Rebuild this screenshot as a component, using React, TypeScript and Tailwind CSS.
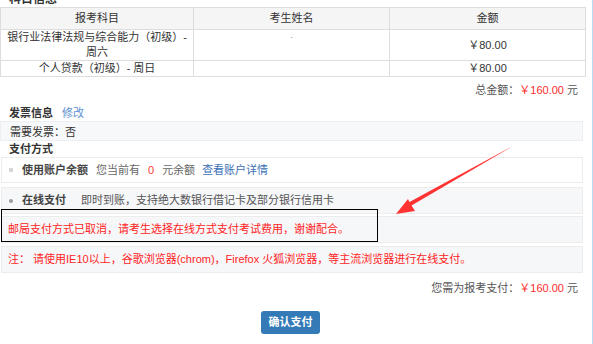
import React from "react";

export default function App() {
  const rows = [
    { subject: ["银行业法律法规与综合能力（初级）-", "周六"], name: "·", amount: "￥80.00" },
    { subject: ["个人贷款（初级）- 周日"], name: "", amount: "￥80.00" },
  ];

  return (
    <div
      className="relative w-[593px] h-[344px] overflow-hidden bg-white border-r border-[#b9dcf2] text-[11px] text-[#333]"
      style={{ fontFamily: '"Liberation Sans", "Noto Sans CJK SC", sans-serif' }}
    >
      <div className="w-[585px]">
        {/* 科目信息 */}
        <div className="-mt-[8px] h-[15px] pl-[9px] text-[12px] font-bold leading-[15px]">科目信息</div>

        <table className="w-[585px] border-collapse table-fixed">
          <colgroup>
            <col className="w-[193px]" />
            <col className="w-[196px]" />
            <col className="w-[196px]" />
          </colgroup>
          <thead>
            <tr className="h-[22px] bg-[#f5f5f5]">
              <th className="border border-[#dddddd] p-0 font-normal text-center">报考科目</th>
              <th className="border border-[#dddddd] p-0 font-normal text-center">考生姓名</th>
              <th className="border border-[#dddddd] p-0 font-normal text-center">金额</th>
            </tr>
          </thead>
          <tbody>
            {rows.map((r, i) => (
              <tr key={i}>
                <td className="border border-[#dddddd] p-0 text-center leading-[15px] whitespace-nowrap">
                  {r.subject.map((s, j) => (
                    <div key={j}>{s}</div>
                  ))}
                </td>
                <td className="border border-[#dddddd] p-0 text-center align-top text-[8px] leading-[15px] text-[#884444]">{r.name}</td>
                <td className="border border-[#dddddd] p-0 text-center leading-[15px]">{r.amount}</td>
              </tr>
            ))}
          </tbody>
        </table>

        <div className="mt-[6px] h-[14px] pr-[7px] text-right leading-[14px] text-[#555]">
          总金额：<span className="text-[#ff2b2b]">￥160.00</span> 元
        </div>

        {/* 发票信息 */}
        <div className="mt-[9px] flex h-[14px] items-center pl-[9px] leading-[14px]">
          <span className="font-bold text-[#333]">发票信息</span>
          <span className="ml-[9px] text-[#5a8fd0]">修改</span>
        </div>
        <div className="mt-[1px] h-[20px] w-[583px] border border-[#eceef2] bg-[#f7f8fa] pl-[9px] pt-[3px] leading-[14px]">
          需要发票：否
        </div>

        {/* 支付方式 */}
        <div className="mt-[1px] h-[15px] pl-[9px] font-bold leading-[15px]">支付方式</div>
        <div className="ml-[1px] w-[582px]">
          <div className="flex h-[26px] items-center border border-[#ececec] bg-white pl-[7px]">
            <span className="inline-block h-[4px] w-[4px] bg-[#d6d6d6]" />
            <span className="ml-[9px] font-bold text-[#444]">使用账户余额</span>
            <span className="ml-[8px] text-[#666]">您当前有</span>
            <span className="ml-[8px] text-[#ff3b3b]">0</span>
            <span className="ml-[8px] text-[#666]">元余额</span>
            <span className="ml-[7px] text-[#3b6fb6]">查看账户详情</span>
          </div>
          <div className="mt-[4px] flex h-[27px] items-center border border-[#ececec] bg-[#f6f7f9] pl-[7px]">
            <span className="inline-block h-[4px] w-[4px] rounded-full bg-[#9a9a9a]" />
            <span className="ml-[9px] font-bold text-[#444]">在线支付</span>
            <span className="ml-[15px] text-[#555]">即时到账，支持绝大数银行借记卡及部分银行信用卡</span>
          </div>
          <div className="mt-[2px] flex h-[27px] items-center border border-[#ececec] bg-[#f6f7f9] pl-[6px] text-[#ff2424]">
            邮局支付方式已取消，请考生选择在线方式支付考试费用，谢谢配合。
          </div>
          <div className="mt-[3px] flex h-[27px] items-center border border-[#ececec] bg-[#f6f7f9] pl-[6px] text-[#ff2424]">
            注： 请使用IE10以上，谷歌浏览器(chrom)，Firefox 火狐浏览器，等主流浏览器进行在线支付。
          </div>
        </div>

        <div className="mt-[8px] h-[14px] pr-[7px] text-right leading-[14px] text-[#555]">
          您需为报考支付：<span className="text-[#ff2b2b]">￥160.00</span> 元
        </div>

        <div className="mt-[16px] flex justify-center pr-[4px]">
          <button className="h-[23px] w-[59px] rounded-[3px] bg-[#337ab7] text-[11px] font-bold text-white">
            确认支付
          </button>
        </div>
      </div>

      {/* 标注框 */}
      <div className="absolute left-[1px] top-[209px] h-[33px] w-[377px] border-[1.5px] border-black" />

      {/* 红色箭头 */}
      <svg className="absolute left-0 top-0" width="593" height="344" viewBox="0 0 593 344">
        <polygon
          points="396,214 408,199 409.5,202 513,146 411.5,205.5 415,211"
          fill="#ff3333"
        />
      </svg>
    </div>
  );
}
